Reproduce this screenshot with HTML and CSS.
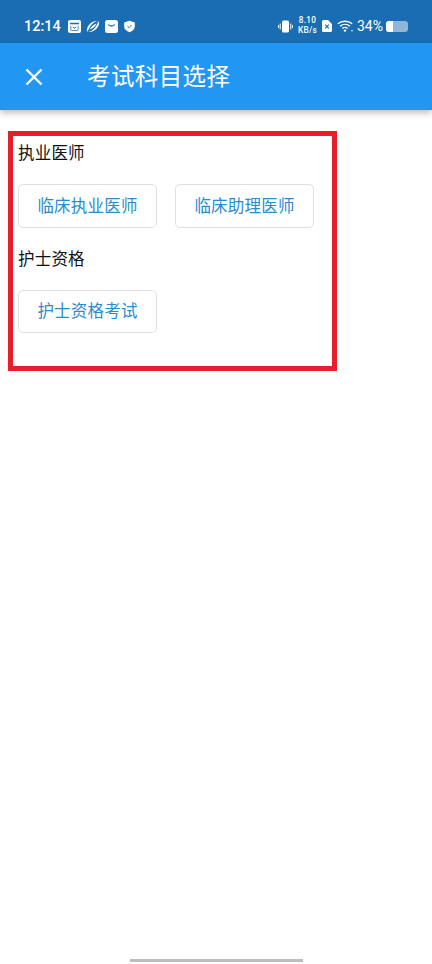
FILE: index.html
```html
<!DOCTYPE html>
<html lang="zh-CN">
<head>
  <meta charset="UTF-8" />
  <meta name="viewport" content="width=device-width, initial-scale=1.0"/>
  <title>考试科目选择</title>
  <link rel="stylesheet" href="styles.css">
</head>
<body>
  <div class="status-bar">
    <div class="status-left">
      <span class="time">12:14</span>
      <svg class="icon-box" viewBox="0 0 13 13"><rect x="0" y="0" width="13" height="13" rx="2" fill="#fff"/><path d="M2 2.800h9v1.500H2z" fill="#1a6db3"/><path d="M2.800 5.800v3.700a1 1 0 0 0 1 1h5.400a1 1 0 0 0 1-1V5.800" fill="none" stroke="#1a6db3" stroke-width="0.800"/><path d="M4.800 7l1.700 1.300L8.200 7" fill="none" stroke="#1a6db3" stroke-width="1"/></svg>
      <svg class="icon-leaf" viewBox="0 0 14 13"><path d="M1 12C0 7 4.500 0.500 12 1 9 1.500 5 3.500 2.600 9.500z" fill="#fff"/><path d="M13 1c1 5-3.500 11.500-11 11 3-.5 7-2.500 9.400-8.500z" fill="#fff"/><path d="M3.500 9.500C5 6.500 7.500 4.500 10.500 3.500 9.500 6.500 7 8.500 3.500 9.500z" fill="#fff"/></svg>
      <svg class="icon-box" viewBox="0 0 13 13"><rect x="0" y="0" width="13" height="13" rx="2.500" fill="#fff"/><path d="M3.300 4.500c1.200 2 5.200 2 6.400 0" fill="none" stroke="#1a6db3" stroke-width="1.300"/></svg>
      <svg class="icon-shield" viewBox="0 0 12 13"><path d="M6 0.200l5.800 1.800v4.500c0 3-2.600 5.200-5.800 6.300-3.200-1.100-5.800-3.300-5.800-6.300V2z" fill="#fff"/><path d="M3.800 6.200l1.700 1.600 2.800-2.900" fill="none" stroke="#1a6db3" stroke-width="1"/></svg>
    </div>
    <div class="status-right">
      <svg class="icon-vibrate" viewBox="0 0 15 13"><rect x="4" y="0.500" width="7" height="12" rx="1.500" fill="#fff"/><path d="M2.200 3.500v6M0.500 5v3M12.800 3.500v6M14.500 5v3" stroke="#fff" stroke-width="1"/></svg>
      <div class="net-speed"><span>8.10</span><span>KB/s</span></div>
      <svg class="icon-sim" viewBox="0 0 10 12"><path d="M1.500 0h4.500L10 4v6.500a1.500 1.500 0 0 1-1.500 1.500h-7A1.500 1.500 0 0 1 0 10.500v-9A1.500 1.500 0 0 1 1.500 0z" fill="#fff"/><path d="M3.200 4.700l3.600 3.600M6.800 4.700L3.200 8.300" stroke="#1a6db3" stroke-width="1.200"/></svg>
      <svg class="icon-wifi" viewBox="0 0 16 12"><path d="M0.800 3.800c4-3.400 10.400-3.400 14.400 0M3 6.200c2.900-2.400 7.100-2.400 10 0M5.300 8.500c1.600-1.300 3.800-1.300 5.400 0" fill="none" stroke="#fff" stroke-width="1.300"/><circle cx="8" cy="10.600" r="1.200" fill="#fff"/><circle cx="15" cy="10.800" r="0.800" fill="#fff"/></svg>
      <span class="battery-text">34%</span>
      <div class="battery"><div class="battery-fill"></div></div>
    </div>
  </div>

  <header class="app-bar">
    <svg class="close-icon" viewBox="0 0 18 18"><path d="M1.500 1.500l15 15M16.500 1.500l-15 15" stroke="#fff" stroke-width="2.400" fill="none"/></svg>
    <div class="app-title">考试科目选择</div>
  </header>

  <div class="highlight-box">
    <div class="group">
      <div class="group-title">执业医师</div>
      <div class="btn-row">
        <a class="subject-btn">临床执业医师</a>
        <a class="subject-btn">临床助理医师</a>
      </div>
    </div>
    <div class="group">
      <div class="group-title">护士资格</div>
      <div class="btn-row">
        <a class="subject-btn">护士资格考试</a>
      </div>
    </div>
  </div>

  <div class="home-bar"></div>
</body>
</html>
```

FILE: styles.css
```css
* {
  margin: 0;
  padding: 0;
  box-sizing: border-box;
  font-family: 'Noto Sans CJK SC', 'Noto Sans', sans-serif;
}

html, body {
  height: 964px;
  overflow: hidden;
}

body {
  background-color: #fff;
  color: #111;
  display: flex;
  flex-direction: column;
}

.status-bar {
  height: 43px;
  background-color: #1a6db3;
  color: #fff;
  display: flex;
  justify-content: space-between;
  align-items: center;
  padding: 18px 24px 9px 24px;
  flex-shrink: 0;
}

.status-left,
.status-right {
  display: flex;
  align-items: center;
}

.time {
  font-family: Roboto, sans-serif;
  font-size: 14.5px;
  font-weight: 500;
  margin-right: 7px;
}

.icon-box {
  width: 13px;
  height: 13px;
}

.icon-leaf {
  width: 14px;
  height: 13px;
  margin: 0 5px;
}

.icon-shield {
  width: 11px;
  height: 13px;
  margin-left: 6px;
}

.icon-vibrate {
  width: 15px;
  height: 13px;
  margin-right: 5px;
}

.net-speed {
  display: flex;
  flex-direction: column;
  align-items: center;
  margin-right: 5px;
}

.net-speed span {
  font-family: Roboto, sans-serif;
  font-size: 8.200px;
  font-weight: 500;
  letter-spacing: 0.300px;
  line-height: 9.600px;
}

.icon-sim {
  width: 10px;
  height: 12px;
  margin-right: 5px;
}

.icon-wifi {
  width: 16px;
  height: 12px;
  margin-right: 4px;
}

.battery-text {
  font-family: Roboto, sans-serif;
  font-size: 14px;
  margin-right: 3px;
}

.battery {
  width: 22px;
  height: 11px;
  border-radius: 3px;
  background-color: #8fb6d9;
  overflow: hidden;
}

.battery-fill {
  width: 34%;
  height: 100%;
  background-color: #fff;
}

.app-bar {
  height: 67px;
  background-color: #2196f3;
  color: #fff;
  display: flex;
  align-items: center;
  padding-left: 25px;
  box-shadow: 0 3px 6px rgba(0,0,0,0.25);
  flex-shrink: 0;
}

.close-icon {
  width: 18px;
  height: 18px;
  margin-right: 44px;
}

.app-title {
  font-size: 23.500px;
  letter-spacing: 0.400px;
  padding-bottom: 4px;
}

.highlight-box {
  width: 329px;
  height: 240px;
  margin: 21px 0 0 8px;
  border: 5px solid #e81f2a;
  padding: 4px 5px 0;
}

.group-title {
  font-size: 16.500px;
  line-height: 24px;
  letter-spacing: 0.200px;
  margin-bottom: 20px;
}

.group + .group {
  margin-top: 18px;
}

.btn-row {
  display: flex;
  gap: 18px;
}

.subject-btn {
  width: 139px;
  height: 43.500px;
  display: flex;
  align-items: center;
  justify-content: center;
  border: 1px solid #dde1e5;
  border-radius: 5px;
  color: #2a8ccc;
  font-size: 16.500px;
  letter-spacing: 0.200px;
  padding-bottom: 2px;
}

.home-bar {
  width: 173px;
  height: 3px;
  background-color: #bdbdbd;
  margin: auto 0 0 130px;
  position: relative;
  top: -2px;
}
```
